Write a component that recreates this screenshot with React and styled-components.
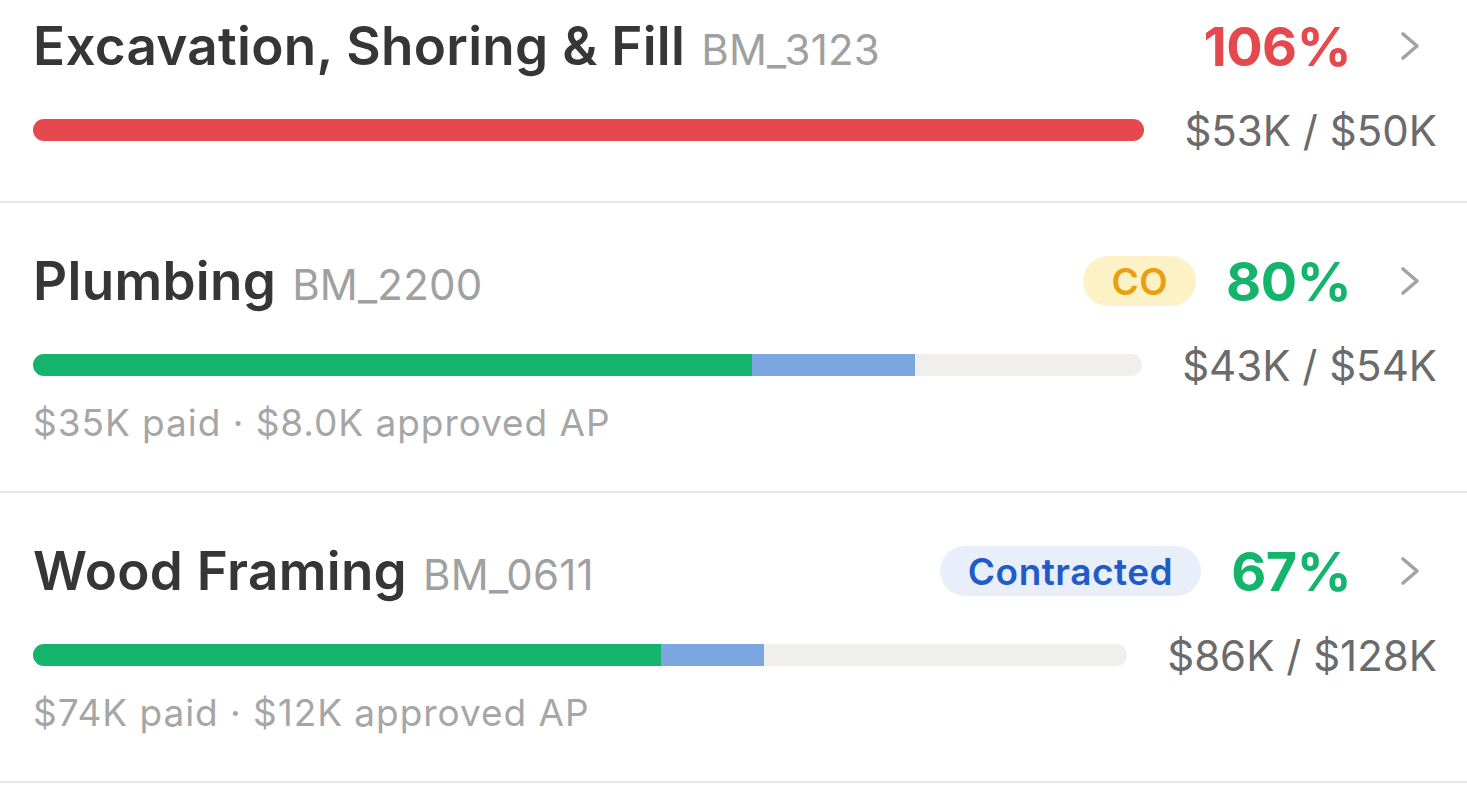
import React from "react"
import styled, { createGlobalStyle } from "styled-components"

const GlobalStyle = createGlobalStyle`
  html, body {
    margin: 0;
    padding: 0;
    background: #ffffff;
    font-family: Inter, "Noto Sans", "Liberation Sans", sans-serif;
    -webkit-font-smoothing: antialiased;
    overflow: hidden;
  }
`

const tones = {
  over: "#e5484d",
  good: "#14b46c",
}

const badgeTones = {
  co: { bg: "#fdf2c6", fg: "#e9a00e" },
  contracted: { bg: "#e8effb", fg: "#1f5cc8" },
}

// list is scrolled a little, so the first row sits partly above the fold
const List = styled.div`
  margin-top: -32px;
`

const Row = styled.div`
  padding: 48px 30px 46px 33px;
  border-bottom: 2px solid #e6e6e6;
`

const Header = styled.div`
  display: flex;
  align-items: center;
  height: 60px;
`

const Title = styled.div`
  flex: 1;
  min-width: 0;
  white-space: nowrap;
  color: #363636;
  font-size: 53px;
  font-weight: 600;
  letter-spacing: 0.3px;
`

const Code = styled.span`
  margin-left: 16px;
  color: #a0a0a0;
  font-size: 42px;
  font-weight: 400;
  letter-spacing: 0.2px;
`

const Badge = styled.span`
  display: inline-flex;
  align-items: center;
  height: 50px;
  padding: 0 28px;
  border-radius: 25px;
  margin-right: 30px;
  background: ${p => badgeTones[p.tone].bg};
  color: ${p => badgeTones[p.tone].fg};
  font-size: 37px;
  font-weight: 600;
  letter-spacing: 0.5px;
`

const Percent = styled.span`
  color: ${p => tones[p.tone]};
  font-size: 54px;
  font-weight: 700;
  letter-spacing: -0.5px;
`

const Chevron = styled.svg`
  width: 22px;
  height: 32px;
  margin-left: 48px;
  margin-right: 16px;
  flex: none;
`

const BarRow = styled.div`
  display: flex;
  align-items: center;
  height: 50px;
  margin-top: 29px;
  gap: 40px;
`

const Track = styled.div`
  flex: 1;
  display: flex;
  height: 22px;
  border-radius: 11px;
  overflow: hidden;
  background: #f0efed;
`

const Fill = styled.div`
  height: 100%;
  background: ${p => p.color};
`

const Amount = styled.span`
  color: #6b6b6b;
  font-size: 42px;
  font-weight: 400;
  white-space: nowrap;
`

const Note = styled.div`
  margin-top: 11px;
  line-height: 44px;
  color: #a6a6a6;
  font-size: 37px;
  font-weight: 400;
  letter-spacing: 0.95px;
`

const lines = [
  {
    name: "Excavation, Shoring & Fill",
    code: "BM_3123",
    pct: "106%",
    tone: "over",
    amount: "$53K / $50K",
    parts: [{ w: 100, color: "#e5484d" }],
  },
  {
    name: "Plumbing",
    code: "BM_2200",
    badge: { tone: "co", label: "CO" },
    pct: "80%",
    tone: "good",
    amount: "$43K / $54K",
    parts: [
      { w: 64.8, color: "#14b46c" },
      { w: 14.7, color: "#7ba6df" },
    ],
    note: "$35K paid · $8.0K approved AP",
  },
  {
    name: "Wood Framing",
    code: "BM_0611",
    badge: { tone: "contracted", label: "Contracted" },
    pct: "67%",
    tone: "good",
    amount: "$86K / $128K",
    parts: [
      { w: 57.4, color: "#14b46c" },
      { w: 9.4, color: "#7ba6df" },
    ],
    note: "$74K paid · $12K approved AP",
  },
]

const BudgetLine = ({ line }) => (
  <Row>
    <Header>
      <Title>
        {line.name}
        <Code>{line.code}</Code>
      </Title>
      {line.badge && <Badge tone={line.badge.tone}>{line.badge.label}</Badge>}
      <Percent tone={line.tone}>{line.pct}</Percent>
      <Chevron viewBox="0 0 22 32">
        <polyline
          points="4,4 18,16 4,28"
          fill="none"
          stroke="#a3a3a3"
          strokeWidth="3.6"
          strokeLinecap="round"
          strokeLinejoin="round"
        />
      </Chevron>
    </Header>
    <BarRow>
      <Track>
        {line.parts.map((p, i) => (
          <Fill key={i} color={p.color} style={{ width: `${p.w}%` }} />
        ))}
      </Track>
      <Amount>{line.amount}</Amount>
    </BarRow>
    {line.note && <Note>{line.note}</Note>}
  </Row>
)

export default function App() {
  return (
    <>
      <GlobalStyle />
      <List>
        {lines.map(line => (
          <BudgetLine key={line.code} line={line} />
        ))}
      </List>
    </>
  )
}
